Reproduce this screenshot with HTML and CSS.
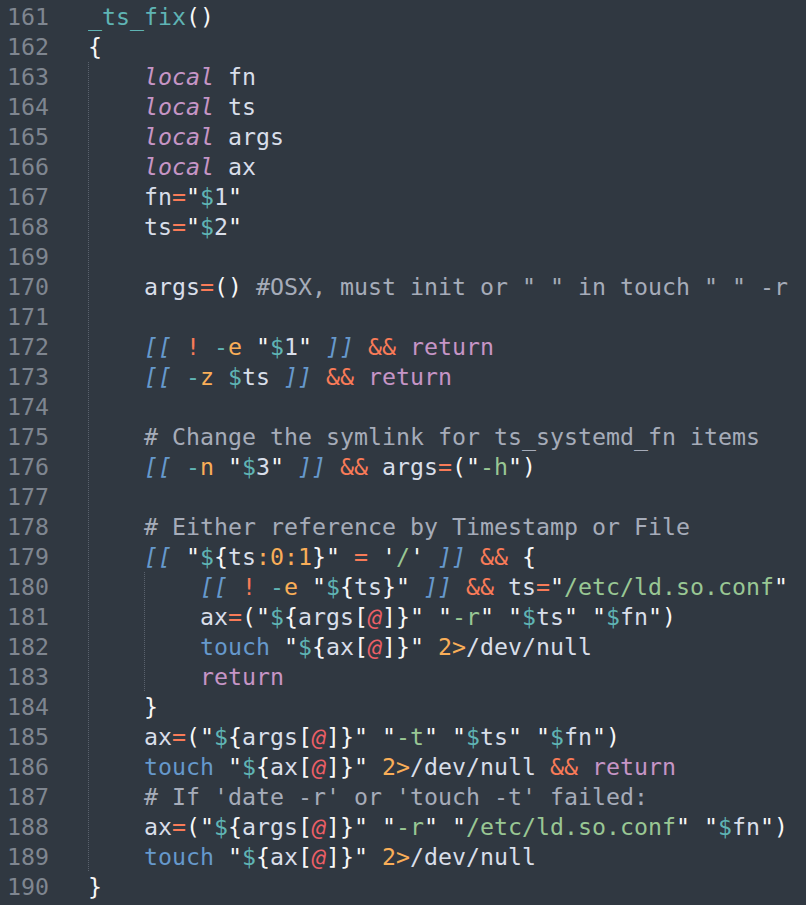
FILE: index.html
```html
<!DOCTYPE html>
<html>
<head>
<meta charset="utf-8">
<link rel="stylesheet" href="styles.css">
</head>
<body>
<div class="editor">
<div class="line"><span class="ln">161</span><span class="c"><span class="f">_ts_fix</span><span class="p">()</span></span></div>
<div class="line"><span class="ln">162</span><span class="c"><span class="p">{</span></span></div>
<div class="line"><span class="ln">163</span><span class="c"><span class="ig">    </span><span class="k">local</span> fn</span></div>
<div class="line"><span class="ln">164</span><span class="c"><span class="ig">    </span><span class="k">local</span> ts</span></div>
<div class="line"><span class="ln">165</span><span class="c"><span class="ig">    </span><span class="k">local</span> args</span></div>
<div class="line"><span class="ln">166</span><span class="c"><span class="ig">    </span><span class="k">local</span> ax</span></div>
<div class="line"><span class="ln">167</span><span class="c"><span class="ig">    </span>fn<span class="o">=</span><span class="p">"</span><span class="v">$</span>1<span class="p">"</span></span></div>
<div class="line"><span class="ln">168</span><span class="c"><span class="ig">    </span>ts<span class="o">=</span><span class="p">"</span><span class="v">$</span>2<span class="p">"</span></span></div>
<div class="line"><span class="ln">169</span><span class="c"><span class="ig">    </span></span></div>
<div class="line"><span class="ln">170</span><span class="c"><span class="ig">    </span>args<span class="o">=</span><span class="p">()</span> <span class="cm">#OSX, must init or " " in touch " " -r</span></span></div>
<div class="line"><span class="ln">171</span><span class="c"><span class="ig">    </span></span></div>
<div class="line"><span class="ln">172</span><span class="c"><span class="ig">    </span><span class="b">[[</span> <span class="o">!</span> <span class="fd">-</span><span class="fl">e</span> <span class="p">"</span><span class="v">$</span>1<span class="p">"</span> <span class="b">]]</span> <span class="o">&amp;&amp;</span> <span class="r">return</span></span></div>
<div class="line"><span class="ln">173</span><span class="c"><span class="ig">    </span><span class="b">[[</span> <span class="fd">-</span><span class="fl">z</span> <span class="v">$</span>ts <span class="b">]]</span> <span class="o">&amp;&amp;</span> <span class="r">return</span></span></div>
<div class="line"><span class="ln">174</span><span class="c"><span class="ig">    </span></span></div>
<div class="line"><span class="ln">175</span><span class="c"><span class="ig">    </span><span class="cm"># Change the symlink for ts_systemd_fn items</span></span></div>
<div class="line"><span class="ln">176</span><span class="c"><span class="ig">    </span><span class="b">[[</span> <span class="fd">-</span><span class="fl">n</span> <span class="p">"</span><span class="v">$</span>3<span class="p">"</span> <span class="b">]]</span> <span class="o">&amp;&amp;</span> args<span class="o">=</span><span class="p">("</span><span class="s">-h</span><span class="p">")</span></span></div>
<div class="line"><span class="ln">177</span><span class="c"><span class="ig">    </span></span></div>
<div class="line"><span class="ln">178</span><span class="c"><span class="ig">    </span><span class="cm"># Either reference by Timestamp or File</span></span></div>
<div class="line"><span class="ln">179</span><span class="c"><span class="ig">    </span><span class="b">[[</span> <span class="p">"</span><span class="v">$</span><span class="p">{</span>ts<span class="n">:0:1</span><span class="p">}"</span> <span class="o">=</span> <span class="p">'</span><span class="s">/</span><span class="p">'</span> <span class="b">]]</span> <span class="o">&amp;&amp;</span> <span class="p">{</span></span></div>
<div class="line"><span class="ln">180</span><span class="c"><span class="ig">    </span><span class="ig">    </span><span class="b">[[</span> <span class="o">!</span> <span class="fd">-</span><span class="fl">e</span> <span class="p">"</span><span class="v">$</span><span class="p">{</span>ts<span class="p">}"</span> <span class="b">]]</span> <span class="o">&amp;&amp;</span> ts<span class="o">=</span><span class="p">"</span><span class="s">/etc/ld.so.conf</span><span class="p">"</span></span></div>
<div class="line"><span class="ln">181</span><span class="c"><span class="ig">    </span><span class="ig">    </span>ax<span class="o">=</span><span class="p">("</span><span class="v">$</span><span class="p">{</span>args<span class="p">[</span><span class="at">@</span><span class="p">]}"</span> <span class="p">"</span><span class="s">-r</span><span class="p">"</span> <span class="p">"</span><span class="v">$</span>ts<span class="p">"</span> <span class="p">"</span><span class="v">$</span>fn<span class="p">")</span></span></div>
<div class="line"><span class="ln">182</span><span class="c"><span class="ig">    </span><span class="ig">    </span><span class="cmd">touch</span> <span class="p">"</span><span class="v">$</span><span class="p">{</span>ax<span class="p">[</span><span class="at">@</span><span class="p">]}"</span> <span class="n">2&gt;</span>/dev/null</span></div>
<div class="line"><span class="ln">183</span><span class="c"><span class="ig">    </span><span class="ig">    </span><span class="r">return</span></span></div>
<div class="line"><span class="ln">184</span><span class="c"><span class="ig">    </span><span class="p">}</span></span></div>
<div class="line"><span class="ln">185</span><span class="c"><span class="ig">    </span>ax<span class="o">=</span><span class="p">("</span><span class="v">$</span><span class="p">{</span>args<span class="p">[</span><span class="at">@</span><span class="p">]}"</span> <span class="p">"</span><span class="s">-t</span><span class="p">"</span> <span class="p">"</span><span class="v">$</span>ts<span class="p">"</span> <span class="p">"</span><span class="v">$</span>fn<span class="p">")</span></span></div>
<div class="line"><span class="ln">186</span><span class="c"><span class="ig">    </span><span class="cmd">touch</span> <span class="p">"</span><span class="v">$</span><span class="p">{</span>ax<span class="p">[</span><span class="at">@</span><span class="p">]}"</span> <span class="n">2&gt;</span>/dev/null <span class="o">&amp;&amp;</span> <span class="r">return</span></span></div>
<div class="line"><span class="ln">187</span><span class="c"><span class="ig">    </span><span class="cm"># If 'date -r' or 'touch -t' failed:</span></span></div>
<div class="line"><span class="ln">188</span><span class="c"><span class="ig">    </span>ax<span class="o">=</span><span class="p">("</span><span class="v">$</span><span class="p">{</span>args<span class="p">[</span><span class="at">@</span><span class="p">]}"</span> <span class="p">"</span><span class="s">-r</span><span class="p">"</span> <span class="p">"</span><span class="s">/etc/ld.so.conf</span><span class="p">"</span> <span class="p">"</span><span class="v">$</span>fn<span class="p">")</span></span></div>
<div class="line"><span class="ln">189</span><span class="c"><span class="ig">    </span><span class="cmd">touch</span> <span class="p">"</span><span class="v">$</span><span class="p">{</span>ax<span class="p">[</span><span class="at">@</span><span class="p">]}"</span> <span class="n">2&gt;</span>/dev/null</span></div>
<div class="line"><span class="ln">190</span><span class="c"><span class="p">}</span></span></div>
</div>
</body>
</html>
```
FILE: styles.css
```css
html, body {
  margin: 0;
  padding: 0;
  background: #303841;
  overflow: hidden;
}
.editor {
  padding-top: 2px;
  font-family: "DejaVu Sans Mono", monospace;
  font-size: 23.25px;
  line-height: 30px;
  color: #d8dee9;
}
.line {
  display: flex;
  height: 30px;
  white-space: pre;
}
.ln {
  flex: 0 0 88px;
  box-sizing: border-box;
  padding-left: 7px;
  color: #7f8690;
}
.c {
  flex: 1 1 auto;
  overflow: hidden;
}
.ig {
  display: inline-block;
  height: 30px;
  vertical-align: top;
  background-image: linear-gradient(to bottom, #5a626d 50%, transparent 50%);
  background-size: 1px 2px;
  background-repeat: repeat-y;
  background-position: 0 0;
}
.f { color: #5fb4b4; }
.p { color: #f7f7f7; }
.k { color: #c695c6; font-style: italic; }
.o { color: #f97b58; }
.v { color: #5fb4b4; }
.s { color: #99c794; }
.cm { color: #a6acb9; }
.b { color: #6699cc; font-style: italic; }
.fd { color: #5fb4b4; }
.fl { color: #f9ae58; }
.r { color: #c695c6; }
.cmd { color: #6699cc; }
.n { color: #f9ae58; }
.at { color: #ec5f66; font-style: italic; }
```
